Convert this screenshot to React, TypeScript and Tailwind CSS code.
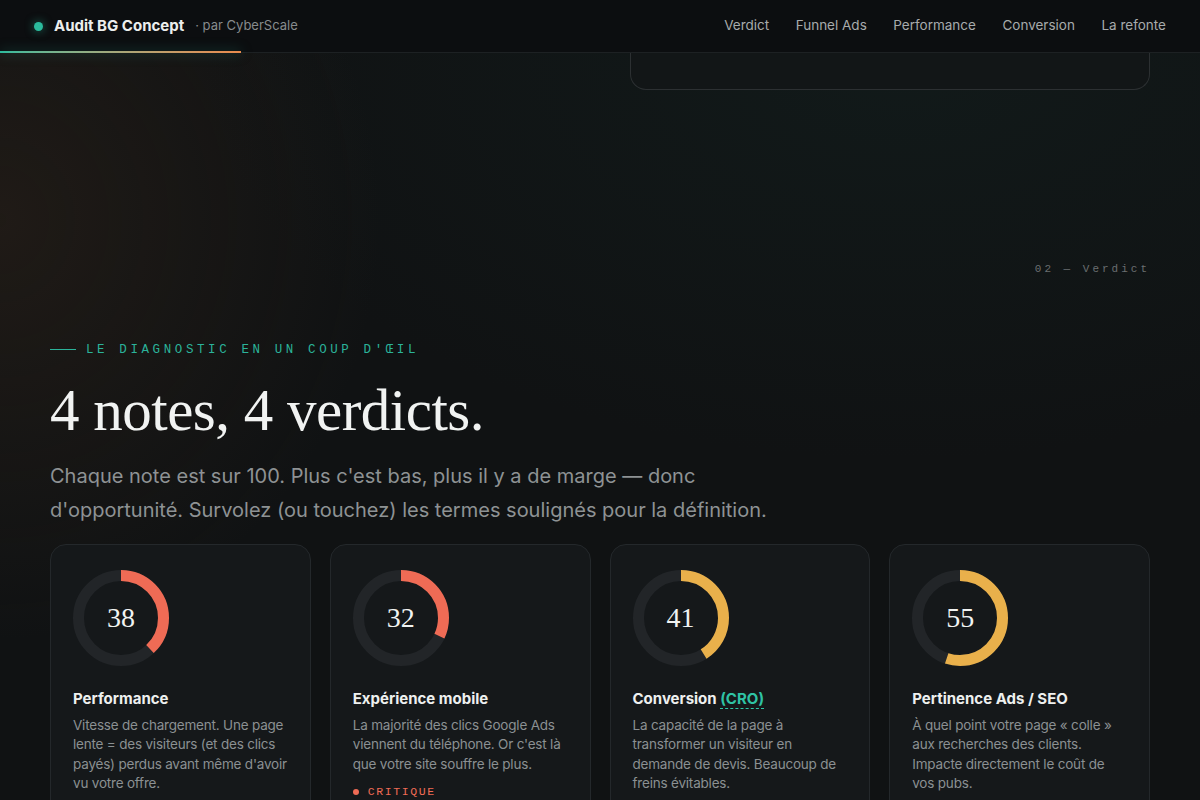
const sans = "font-['Inter','Noto_Sans',sans-serif]";
const serif = "font-['Liberation_Serif','DejaVu_Serif',serif]";
const mono = "font-['Liberation_Mono','DejaVu_Sans_Mono',monospace]";

const links = ['Verdict', 'Funnel Ads', 'Performance', 'Conversion', 'La refonte'];

type Score = {
  value: number;
  tone: 'red' | 'amber';
  title: React.ReactNode;
  text: string;
  flag?: string;
};

const scores: Score[] = [
  {
    value: 38,
    tone: 'red',
    title: 'Performance',
    text: "Vitesse de chargement. Une page lente = des visiteurs (et des clics payés) perdus avant même d'avoir vu votre offre.",
  },
  {
    value: 32,
    tone: 'red',
    title: 'Expérience mobile',
    text: "La majorité des clics Google Ads viennent du téléphone. Or c'est là que votre site souffre le plus.",
    flag: 'CRITIQUE',
  },
  {
    value: 41,
    tone: 'amber',
    title: (
      <>
        Conversion{' '}
        <span className="text-[#2fc3a5] border-b border-dashed border-[#2fc3a5]">(CRO)</span>
      </>
    ),
    text: 'La capacité de la page à transformer un visiteur en demande de devis. Beaucoup de freins évitables.',
  },
  {
    value: 55,
    tone: 'amber',
    title: 'Pertinence Ads / SEO',
    text: 'À quel point votre page « colle » aux recherches des clients. Impacte directement le coût de vos pubs.',
  },
];

function Ring({ value, tone }: { value: number; tone: 'red' | 'amber' }) {
  const r = 42.5;
  const c = 2 * Math.PI * r;
  const color = tone === 'red' ? '#ef6b55' : '#e9b04b';
  return (
    <div className="relative w-[96px] h-[96px]">
      <svg width="96" height="96" viewBox="0 0 96 96" className="-rotate-90">
        <circle cx="48" cy="48" r={r} fill="none" stroke="#222528" strokeWidth="11" />
        <circle
          cx="48"
          cy="48"
          r={r}
          fill="none"
          stroke={color}
          strokeWidth="11"
          strokeDasharray={`${(c * value) / 100} ${c}`}
        />
      </svg>
      <div className={`absolute inset-0 flex items-center justify-center ${serif} text-[28px] font-medium text-[#f1f3f2]`}>
        {value}
      </div>
    </div>
  );
}

function ScoreCard({ s }: { s: Score }) {
  return (
    <div className="rounded-[16px] border border-[#24282b] bg-[#15181a] px-[22px] pt-[25px] pb-6 h-[300px]">
      <Ring value={s.value} tone={s.tone} />
      <h3 className={`mt-[22px] text-[15px] font-bold text-[#eef0ef] ${sans}`}>{s.title}</h3>
      <p className={`mt-[5px] text-[13.5px] leading-[19.5px] tracking-[-0.2px] text-[#8b9092] ${sans}`}>{s.text}</p>
      {s.flag && (
        <div className={`mt-[9px] flex items-center gap-[9px] text-[11.5px] tracking-[1.6px] text-[#ef6b55] ${mono}`}>
          <span className="w-[6px] h-[6px] rounded-full bg-[#ef6b55]" />
          {s.flag}
        </div>
      )}
    </div>
  );
}

export default function App() {
  return (
    <div
      className={`relative min-h-screen overflow-hidden bg-[#101213] bg-[radial-gradient(ellipse_380px_420px_at_0px_220px,rgba(60,42,28,0.35),transparent),radial-gradient(ellipse_700px_400px_at_900px_60px,rgba(20,40,38,0.35),transparent)] ${sans}`}
    >
      <header className="relative z-10 h-[53px] flex items-center justify-between pl-[34px] pr-[34px] bg-[#0c0e10] border-b border-[#1d2123]">
        <div className="flex items-center">
          <span className="w-[9px] h-[9px] rounded-full bg-[#2bbb9d] shadow-[0_0_10px_rgba(43,187,157,0.6)]" />
          <span className="ml-[11px] text-[15px] font-bold text-[#eceeed]">Audit BG Concept</span>
          <span className="ml-[11px] text-[13px] text-[#878b8d]">· par CyberScale</span>
        </div>
        <nav className="mb-[1px] flex items-center gap-[26.5px] text-[13.5px] text-[#a7abac]">
          {links.map((l) => (
            <span key={l}>{l}</span>
          ))}
        </nav>
        <div className="absolute left-0 bottom-[-1px] h-[2px] w-[241px] bg-gradient-to-r from-[#2bbb9d] to-[#ea8a4c] shadow-[0_0_12px_rgba(43,187,157,0.5)]" />
      </header>

      <main className="px-[50px]">
        <div className="ml-[580px] w-[520px] h-[37px] rounded-b-[16px] border-x border-b border-[#2c3032] bg-[#121617]" />

        <div className={`mt-[171px] text-right text-[11px] tracking-[3px] text-[#6a6e70] ${mono}`}>02 — Verdict</div>

        <div className={`mt-[63px] flex items-center gap-[10px] text-[12.5px] tracking-[3.6px] text-[#2bb39a] ${mono}`}>
          <span className="w-[26px] h-px bg-[#2bb39a]" />
          LE DIAGNOSTIC EN UN COUP D'ŒIL
        </div>

        <h1 className={`mt-[19px] ${serif} text-[59px] leading-[64px] text-[#f1f3f2] tracking-[-0.5px]`}>
          4 notes, 4 verdicts.
        </h1>

        <p className="mt-[17px] max-w-[760px] text-[20px] leading-[34px] text-[#8e9294]">
          Chaque note est sur 100. Plus c'est bas, plus il y a de marge — donc d'opportunité. Survolez (ou touchez) les
          termes soulignés pour la définition.
        </p>

        <div className="mt-[17px] grid grid-cols-4 gap-[19px]">
          {scores.map((s) => (
            <ScoreCard key={s.value} s={s} />
          ))}
        </div>
      </main>
    </div>
  );
}
